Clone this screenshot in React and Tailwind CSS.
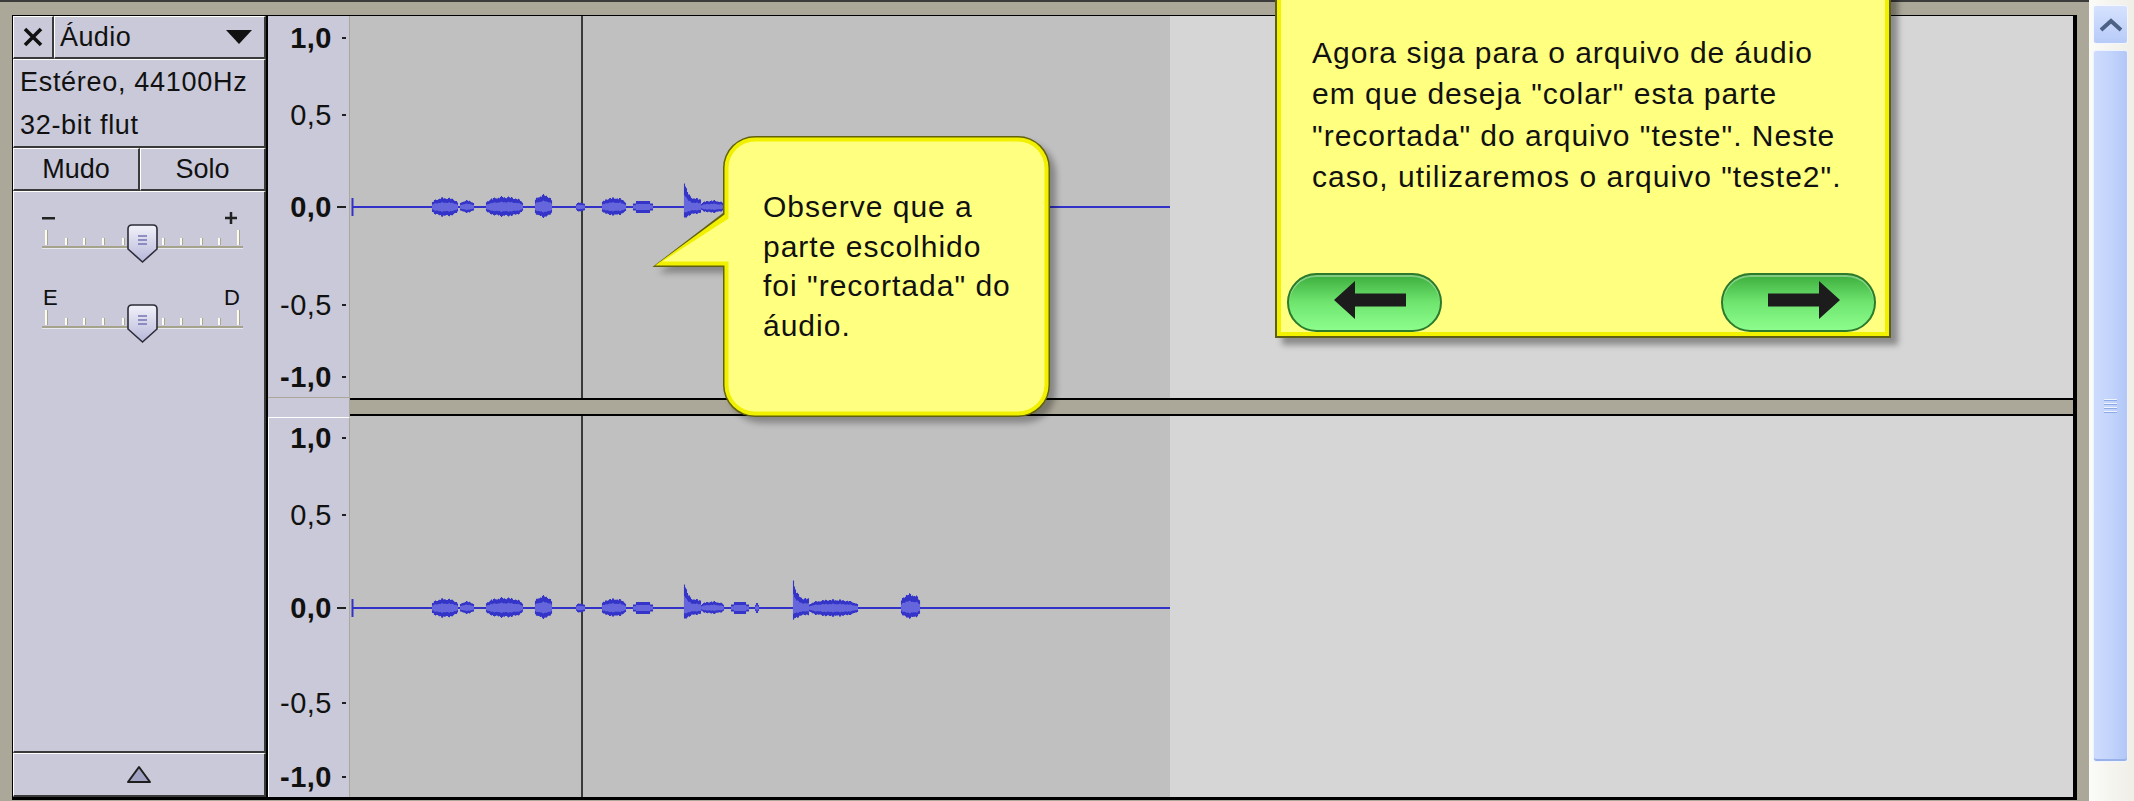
import React from "react";

// waveform blobs: [x0, x1, up, down, kind] in page px (kind 0 = round, 1 = flat, 2 = spike)
const FEATS = [
  [431, 458, 10, 10, 0],
  [459, 474, 7, 6, 0],
  [485, 523, 11, 10, 0],
  [534, 552, 13, 11, 0],
  [575, 585, 5, 5, 0],
  [601, 626, 10, 9, 0],
  [633, 652, 6, 6, 1],
  [684, 700, 29, 13, 2],
  [700, 724, 7, 6, 0],
  [731, 748, 6, 6, 1],
  [755, 758, 5, 5, 1],
  [793, 808, 33, 14, 2],
  [808, 858, 9, 9, 0],
  [900, 920, 15, 11, 0],
];

const wavePaths = (c, limit) => {
  let outer = "";
  let inner = "";
  for (const [x0, x1, up, dn, kind] of FEATS) {
    if (x1 > limit) continue;
    for (let x = x0; x <= x1; x++) {
      const t = (x - x0) / (x1 - x0);
      const j = 0.8 + 0.2 * Math.abs(Math.sin(x * 0.9) * Math.cos(x * 0.37));
      let u, d;
      if (kind === 2) {
        u = up * (0.3 + 0.7 * Math.exp(-5 * t)) * j;
        d = dn * (0.5 + 0.5 * Math.exp(-3 * t)) * j;
      } else if (kind === 1) {
        const s = t < 0.12 || t > 0.88 ? 0.6 : 1;
        u = up * s;
        d = dn * s;
      } else {
        const s = Math.pow(Math.sin(Math.PI * t), 0.3);
        u = up * s * j;
        d = dn * s * j;
      }
      const px = x - 350 + 0.5;
      outer += `M${px} ${(c - u).toFixed(1)}V${(c + d).toFixed(1)}`;
      inner += `M${px} ${(c - u * 0.5).toFixed(1)}V${(c + d * 0.5).toFixed(1)}`;
    }
  }
  return { outer, inner };
};

const Wave = ({ c, limit }) => {
  const { outer, inner } = wavePaths(c, limit);
  return (
    <svg className="absolute inset-0 w-full h-full" fill="none">
      <line x1="232" y1="0" x2="232" y2="400" stroke="#3a3a3a" strokeWidth="2" />
      <line x1="2" y1={c} x2="820" y2={c} stroke="#3232c8" strokeWidth="2" />
      <line x1="2.5" y1={c - 9} x2="2.5" y2={c + 9} stroke="#3232c8" strokeWidth="2" />
      <path d={outer} stroke="#3434c8" strokeWidth="1.1" />
      <path d={inner} stroke="#6666dc" strokeWidth="1" />
    </svg>
  );
};

const bevel =
  "border-t border-l border-t-white border-l-white border-b-2 border-r-2 border-b-[#3a3a3a] border-r-[#3a3a3a]";

const Label = ({ top, text, bold, tick }) => (
  <>
    <div
      className={`absolute right-[17px] text-[29px] leading-[30px] tracking-[0.5px] ${bold ? "font-bold" : ""}`}
      style={{ top }}
    >
      {text}
    </div>
    <div
      className={`absolute right-[3px] h-[2px] bg-[#202020] ${tick === "long" ? "w-[9px]" : "w-[4px]"}`}
      style={{ top: top + 14 }}
    />
  </>
);

const Ruler = ({ tops }) => (
  <>
    <Label top={tops[0]} text="1,0" bold />
    <Label top={tops[1]} text="0,5" />
    <Label top={tops[2]} text="0,0" bold tick="long" />
    <Label top={tops[3]} text="-0,5" />
    <Label top={tops[4]} text="-1,0" bold />
  </>
);

const TICKS = [31, 51, 69, 88, 108, 148, 166, 186, 204, 223];

const SliderDrawing = ({ dy }) => (
  <g transform={`translate(0 ${dy})`}>
    {TICKS.map((x, i) => {
      const tall = i === 0 || i === TICKS.length - 1;
      return (
        <g key={x}>
          <rect x={x} y={tall ? 38 : 46} width="2" height={tall ? 15 : 7} fill="#fbfbf2" />
          <rect x={x + 2} y={tall ? 38 : 46} width="1" height={tall ? 15 : 7} fill="#a9a790" />
        </g>
      );
    })}
    <rect x="28" y="54" width="201" height="2" fill="#a6a38c" />
    <rect x="28" y="56" width="201" height="1" fill="#e8e8ee" />
    <path
      d="M118 33 H139 Q143 33 143 37 V57 L128.5 70 L114 57 V37 Q114 33 118 33 Z"
      fill="url(#thumbGrad)"
      stroke="#2c2c38"
      strokeWidth="1.6"
    />
    <path d="M124 44 H133 M124 48 H133 M124 52 H133" stroke="#7474b4" strokeWidth="1.5" />
  </g>
);

const TrackHeader = () => (
  <div className="w-[255px] flex flex-col border-r-2 border-black bg-[#c9c9d9]">
    <div className="flex h-[43px]">
      <div className={`w-[41px] flex items-center justify-center ${bevel}`}>
        <svg width="22" height="20" viewBox="0 0 22 20">
          <path d="M3 2 L19 18 M19 2 L3 18" stroke="#111" strokeWidth="3.6" />
        </svg>
      </div>
      <div className={`flex-1 flex items-center justify-between pl-[5px] pr-[12px] ${bevel}`}>
        <span className="text-[27px] tracking-[0.4px]">Áudio</span>
        <svg width="26" height="14" viewBox="0 0 26 14">
          <polygon points="0,0 26,0 13,14" fill="#111" />
        </svg>
      </div>
    </div>

    <div className={`h-[89px] pl-[6px] pt-[1px] text-[27px] leading-[43px] tracking-[0.7px] ${bevel}`}>
      <div>Estéreo, 44100Hz</div>
      <div>32-bit flut</div>
    </div>

    <div className="flex h-[43px] text-[27px]">
      <div className={`w-[127px] flex items-center justify-center ${bevel}`}>Mudo</div>
      <div className={`flex-1 flex items-center justify-center ${bevel}`}>Solo</div>
    </div>

    <div className={`flex-1 ${bevel}`}>
      <svg width="252" height="170" viewBox="0 0 252 170">
        <defs>
          <linearGradient id="thumbGrad" x1="0" y1="0" x2="0" y2="1">
            <stop offset="0" stopColor="#f2f2fb" />
            <stop offset="1" stopColor="#b6b6d8" />
          </linearGradient>
        </defs>
        <rect x="28" y="25" width="13" height="2.5" fill="#222" />
        <path d="M211 26 H223 M217 20 V32" stroke="#222" strokeWidth="2.5" />
        <text x="29" y="113" fontSize="22" fill="#111" fontFamily="Liberation Sans, Arial, sans-serif">
          E
        </text>
        <text x="210" y="113" fontSize="22" fill="#111" fontFamily="Liberation Sans, Arial, sans-serif">
          D
        </text>
        <SliderDrawing dy={0} />
        <SliderDrawing dy={80} />
      </svg>
    </div>

    <div className={`h-[44px] flex items-center justify-center ${bevel}`}>
      <svg width="26" height="20" viewBox="0 0 26 20">
        <path d="M13 2 L24 17 H2 Z" fill="#a2a2c2" stroke="#1e1e1e" strokeWidth="2" strokeLinejoin="round" />
      </svg>
    </div>
  </div>
);

const bubblePath = (o) => {
  const x0 = 85 - o;
  const x1 = 408 + o;
  const y0 = 13 - o;
  const y1 = 290 + o;
  const r = 30 + o;
  return `M${x0 + r} ${y0} H${x1 - r} A${r} ${r} 0 0 1 ${x1} ${y0 + r} V${y1 - r} A${r} ${r} 0 0 1 ${x1 - r} ${y1} H${x0 + r} A${r} ${r} 0 0 1 ${x0} ${y1 - r} V${140 + o} L${16 - o * 1.8} ${140 + o} L${x0} ${90 - o} V${y0 + r} A${r} ${r} 0 0 1 ${x0 + r} ${y0} Z`;
};

const SpeechBubble = () => (
  <div className="absolute left-[640px] top-[125px] w-[430px] h-[310px]">
    <svg className="absolute inset-0" width="430" height="310">
      <defs>
        <filter id="blur" x="-10%" y="-10%" width="120%" height="120%">
          <feGaussianBlur stdDeviation="3" />
        </filter>
      </defs>
      <path d={bubblePath(2)} transform="translate(6 6)" fill="#000" opacity="0.3" filter="url(#blur)" />
      <path d={bubblePath(2)} fill="#62620c" />
      <path d={bubblePath(0.5)} fill="#f0f000" />
      <path d={bubblePath(-3.5)} fill="#ffff80" />
    </svg>
    <div className="absolute left-[123px] top-[62px] text-[30px] leading-[39.5px] tracking-[1px] whitespace-nowrap text-[#111]">
      Observe que a<br />
      parte escolhido<br />
      foi "recortada" do<br />
      áudio.
    </div>
  </div>
);

const NavButton = ({ dir }) => (
  <button className="w-[155px] h-[59px] rounded-full border-2 border-[#2c7a2c] bg-gradient-to-b from-[#3cae3c] via-[#6fe56f] to-[#8cfd8c] flex items-center justify-center pl-[10px] pb-[6px] shadow-[inset_0_2px_0_rgba(255,255,255,0.35)]">
    <svg width="72" height="38" viewBox="0 0 72 38">
      {dir === "left" ? (
        <path d="M0 19 L21 0 V12.5 H72 V25.5 H21 V38 Z" fill="#1c1c1c" />
      ) : (
        <path d="M72 19 L51 0 V12.5 H0 V25.5 H51 V38 Z" fill="#1c1c1c" />
      )}
    </svg>
  </button>
);

const NoteBox = () => (
  <div className="absolute left-[1275px] top-[-10px] w-[616px] h-[348px] bg-[#5e5e14] p-[2px] shadow-[7px_7px_6px_rgba(0,0,0,0.35)]">
    <div className="h-full flex flex-col border-[4px] border-[#f2f200] bg-[#ffff80] pl-[31px] pt-[36px]">
      <div className="text-[30px] leading-[41.3px] tracking-[1px] whitespace-nowrap text-[#111]">
        Agora siga para o arquivo de áudio<br />
        em que deseja "colar" esta parte<br />
        "recortada" do arquivo "teste". Neste<br />
        caso, utilizaremos o arquivo "teste2".
      </div>
      <div className="mt-auto flex justify-between ml-[-25px] pr-[9px]">
        <NavButton dir="left" />
        <NavButton dir="right" />
      </div>
    </div>
  </div>
);

const Scrollbar = () => (
  <div className="w-[45px] flex flex-col bg-gradient-to-r from-[#fbfbf8] to-[#efeee7] pt-[5px] pl-[4px] pr-[6px]">
    <div className="h-[39px] rounded-[3px] border border-[#f4f7ff] bg-gradient-to-b from-[#d6e2fe] to-[#b7cbf9] flex items-center justify-center">
      <svg width="24" height="14" viewBox="0 0 24 14">
        <polyline points="2,12 12,3 22,12" fill="none" stroke="#4d6185" strokeWidth="4" />
      </svg>
    </div>
    <div className="mt-[6px] h-[712px] rounded-[3px] border border-[#eef3fe] bg-gradient-to-r from-[#cddbfd] via-[#c3d4fc] to-[#b2c7f7] flex items-center justify-center shadow-[inset_0_-2px_0_#98b1ea]">
      <div className="flex flex-col gap-[2px]">
        {[0, 1, 2, 3].map((i) => (
          <div key={i} className="w-[13px] h-[2px] bg-[#eef3fe] border-b border-[#8fa9e6]" />
        ))}
      </div>
    </div>
  </div>
);

export default function App() {
  return (
    <div className="relative flex w-[2134px] h-[801px] overflow-hidden bg-[#aca899] text-[#111] [font-family:'Liberation_Sans',Arial,sans-serif]">
      <div className="flex-1 flex flex-col border-t-2 border-[#3b3b3b] pt-[13px] px-[12px]">
        <div className="flex h-[785px] border-t border-l border-b-[3px] border-black">
          <TrackHeader />

          <div className="w-[82px] flex flex-col bg-[#c9c9d9]">
            <div className="relative h-[382px] border-r border-[#aca899] border-b">
              <Ruler tops={[7, 84, 176, 274, 346]} />
            </div>
            <div className="h-[19px] border-r border-[#aca899]" />
            <div className="relative flex-1 border-t border-l border-white border-r border-r-[#aca899]">
              <Ruler tops={[5, 82, 175, 270, 344]} />
            </div>
          </div>

          <div className="flex-1 flex flex-col border-r-4 border-black">
            <div className="relative flex h-[384px] border-b-2 border-black">
              <div className="w-[820px] bg-[#c0c0c0]" />
              <div className="flex-1 bg-[#d6d6d6]" />
              <Wave c={191} limit={724} />
            </div>
            <div className="h-[14px] bg-[#aca899]" />
            <div className="relative flex flex-1 border-t-2 border-black">
              <div className="w-[820px] bg-[#c0c0c0]" />
              <div className="flex-1 bg-[#d6d6d6]" />
              <Wave c={192} limit={2000} />
            </div>
          </div>
        </div>
      </div>

      <Scrollbar />

      <SpeechBubble />
      <NoteBox />
    </div>
  );
}
